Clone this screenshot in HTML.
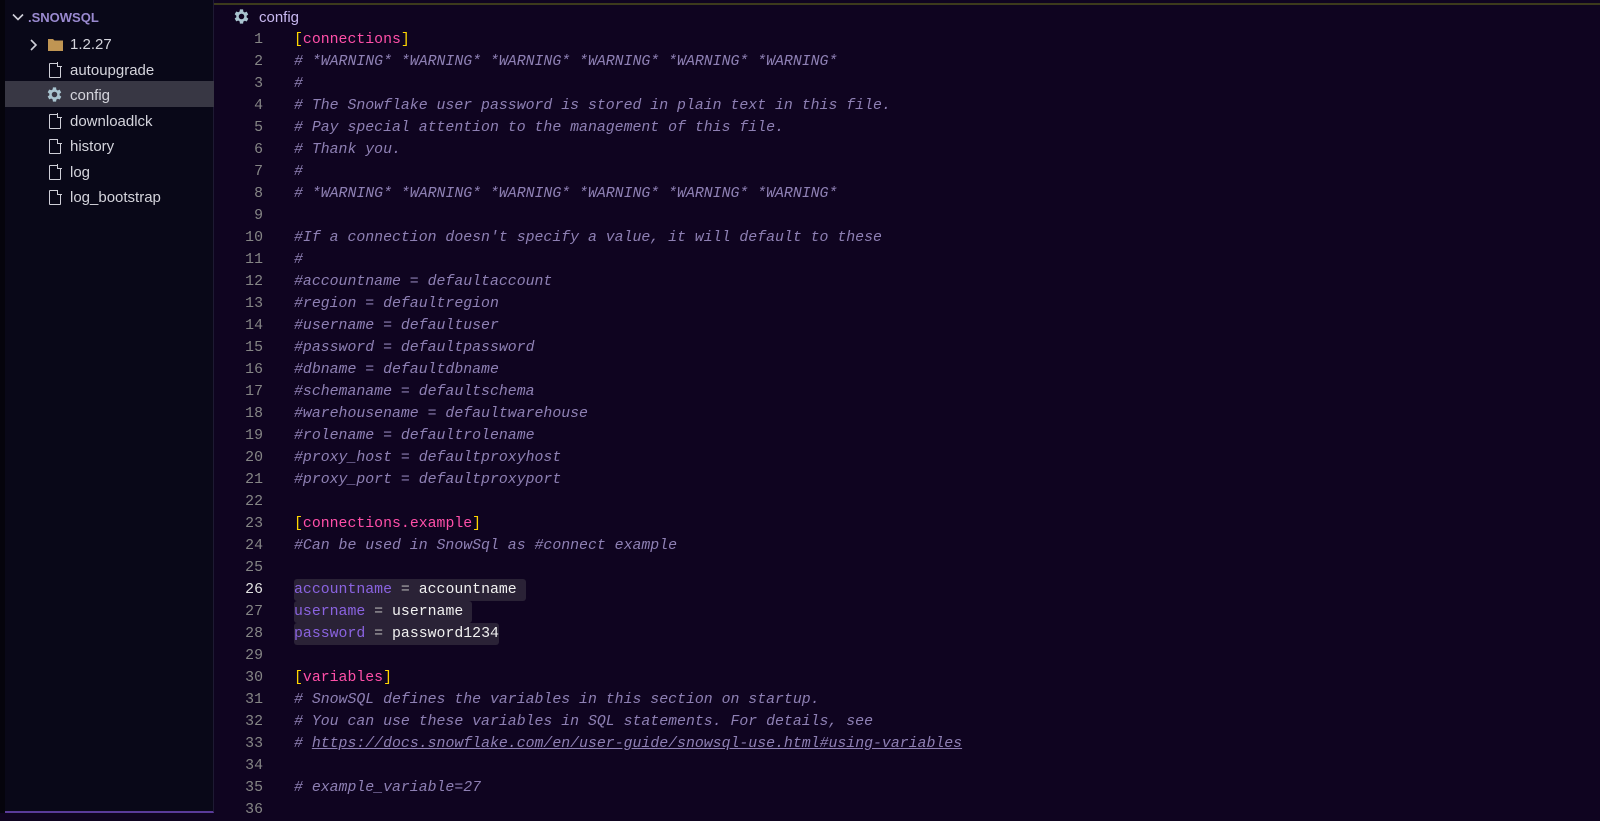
<!DOCTYPE html>
<html><head><meta charset="utf-8"><style>
*{margin:0;padding:0;box-sizing:border-box}
body{width:1600px;height:813px;overflow:hidden;background:#0f0420;font-family:"Liberation Sans",sans-serif;position:relative}
#side{position:absolute;left:0;top:0;width:214px;height:813px;background:#090818;border-right:1px solid #1e1a33;border-bottom:2px solid #5a3a9a}
#strip{position:absolute;left:0;top:0;width:5px;height:813px;background:#05040c}
.row{position:absolute;left:5px;width:209px;height:25.5px;color:#d4d4dc;font-size:15px;line-height:25.5px}
.row span{position:absolute;left:65px}
.sel{background:#383744}
.file{position:absolute;left:44px;top:5px;width:12px;height:15px;border:1.5px solid #cfcfd8;border-radius:1px}
.file:after{content:"";position:absolute;right:-1.5px;top:-1.5px;width:4px;height:4px;background:#090818;border-left:1.5px solid #cfcfd8;border-bottom:1.5px solid #cfcfd8}
#topline{position:absolute;left:214px;top:3px;width:1386px;height:2px;background:#3c3a1c}
#tab{position:absolute;left:259px;top:9px;color:#c8b8f0;font-size:15px}
#code{position:absolute;left:0;top:29px;font-family:"Liberation Mono",monospace;font-size:14.85px}
.l{position:absolute;left:294px;height:22px;line-height:22px;white-space:pre}
.n{position:absolute;left:200px;width:63px;text-align:right;color:#858585;height:22px;line-height:22px}
.c{color:#8e80b4;font-style:italic}
.b{color:#ffd700}.s{color:#ff4fa8}
.k{color:#8a63e0}.v{color:#f0f0f0}.e{color:#b0b0b0}
.hl{background:#2a2236;border-radius:3px}
</style></head><body>
<div id="side"><div id="strip"></div>
<div class="row" style="top:5px;"><svg style="position:absolute;left:7px;top:8px" width="12" height="9" viewBox="0 0 12 9"><path d="M1 1.5L6 6.5L11 1.5" stroke="#cfcfd8" stroke-width="1.6" fill="none"/></svg><span style="left:23px;font-weight:bold;font-size:13px;color:#9a8ad0">.SNOWSQL</span></div>
<div class="row" style="top:32px"><svg style="position:absolute;left:24px;top:7px" width="9" height="12" viewBox="0 0 9 12"><path d="M2 1L7 6L2 11" stroke="#cfcfd8" stroke-width="1.6" fill="none"/></svg><svg style="position:absolute;left:43px;top:6px" width="15" height="13" viewBox="0 0 15 13"><path d="M0 1h5l1.5 1.5H15V13H0z" fill="#c09553"/></svg><span>1.2.27</span></div>
<div class="row" style="top:57.5px"><div class="file"></div><span>autoupgrade</span></div>
<div class="row sel" style="top:81px;height:26px;line-height:29px"><svg style="position:absolute;left:40px;top:4px" width="19" height="19" viewBox="0 0 24 24"><path fill="#a9c4d0" d="M19.4 13a7.5 7.5 0 0 0 0-2l2.1-1.6-2-3.5-2.5 1a7.4 7.4 0 0 0-1.7-1L15 3h-4l-.4 2.7a7.4 7.4 0 0 0-1.7 1l-2.5-1-2 3.5L6.5 11a7.5 7.5 0 0 0 0 2l-2.1 1.6 2 3.5 2.5-1a7.4 7.4 0 0 0 1.7 1L11 21h4l.4-2.7a7.4 7.4 0 0 0 1.7-1l2.5 1 2-3.5zM13 15.5a3.5 3.5 0 1 1 0-7 3.5 3.5 0 0 1 0 7z" transform="translate(-1 0)"/></svg><span>config</span></div>
<div class="row" style="top:108.5px"><div class="file"></div><span>downloadlck</span></div>
<div class="row" style="top:134px"><div class="file"></div><span>history</span></div>
<div class="row" style="top:159.5px"><div class="file"></div><span>log</span></div>
<div class="row" style="top:185px"><div class="file"></div><span>log_bootstrap</span></div>
</div>
<div id="topline"></div>
<svg style="position:absolute;left:232px;top:7px" width="19" height="19" viewBox="0 0 24 24"><path fill="#a9c4d0" d="M19.4 13a7.5 7.5 0 0 0 0-2l2.1-1.6-2-3.5-2.5 1a7.4 7.4 0 0 0-1.7-1L15 3h-4l-.4 2.7a7.4 7.4 0 0 0-1.7 1l-2.5-1-2 3.5L6.5 11a7.5 7.5 0 0 0 0 2l-2.1 1.6 2 3.5 2.5-1a7.4 7.4 0 0 0 1.7 1L11 21h4l.4-2.7a7.4 7.4 0 0 0 1.7-1l2.5 1 2-3.5zM13 15.5a3.5 3.5 0 1 1 0-7 3.5 3.5 0 0 1 0 7z" transform="translate(-1 0)"/></svg>
<div id="tab">config</div>
<div id="code">
<div class="n" style="top:0px">1</div><div class="l" style="top:0px"><span class="b">[</span><span class="s">connections</span><span class="b">]</span></div>
<div class="n" style="top:22px">2</div><div class="l c" style="top:22px"># *WARNING* *WARNING* *WARNING* *WARNING* *WARNING* *WARNING*</div>
<div class="n" style="top:44px">3</div><div class="l c" style="top:44px">#</div>
<div class="n" style="top:66px">4</div><div class="l c" style="top:66px"># The Snowflake user password is stored in plain text in this file.</div>
<div class="n" style="top:88px">5</div><div class="l c" style="top:88px"># Pay special attention to the management of this file.</div>
<div class="n" style="top:110px">6</div><div class="l c" style="top:110px"># Thank you.</div>
<div class="n" style="top:132px">7</div><div class="l c" style="top:132px">#</div>
<div class="n" style="top:154px">8</div><div class="l c" style="top:154px"># *WARNING* *WARNING* *WARNING* *WARNING* *WARNING* *WARNING*</div>
<div class="n" style="top:176px">9</div>
<div class="n" style="top:198px">10</div><div class="l c" style="top:198px">#If a connection doesn't specify a value, it will default to these</div>
<div class="n" style="top:220px">11</div><div class="l c" style="top:220px">#</div>
<div class="n" style="top:242px">12</div><div class="l c" style="top:242px">#accountname = defaultaccount</div>
<div class="n" style="top:264px">13</div><div class="l c" style="top:264px">#region = defaultregion</div>
<div class="n" style="top:286px">14</div><div class="l c" style="top:286px">#username = defaultuser</div>
<div class="n" style="top:308px">15</div><div class="l c" style="top:308px">#password = defaultpassword</div>
<div class="n" style="top:330px">16</div><div class="l c" style="top:330px">#dbname = defaultdbname</div>
<div class="n" style="top:352px">17</div><div class="l c" style="top:352px">#schemaname = defaultschema</div>
<div class="n" style="top:374px">18</div><div class="l c" style="top:374px">#warehousename = defaultwarehouse</div>
<div class="n" style="top:396px">19</div><div class="l c" style="top:396px">#rolename = defaultrolename</div>
<div class="n" style="top:418px">20</div><div class="l c" style="top:418px">#proxy_host = defaultproxyhost</div>
<div class="n" style="top:440px">21</div><div class="l c" style="top:440px">#proxy_port = defaultproxyport</div>
<div class="n" style="top:462px">22</div>
<div class="n" style="top:484px">23</div><div class="l" style="top:484px"><span class="b">[</span><span class="s">connections.example</span><span class="b">]</span></div>
<div class="n" style="top:506px">24</div><div class="l c" style="top:506px">#Can be used in SnowSql as #connect example</div>
<div class="n" style="top:528px">25</div>
<div class="n" style="top:550px;color:#e0e0e0">26</div><div class="l hl" style="top:550px;padding-right:9px"><span class="k">accountname</span><span class="e"> = </span><span class="v">accountname</span></div>
<div class="n" style="top:572px">27</div><div class="l hl" style="top:572px;padding-right:9px"><span class="k">username</span><span class="e"> = </span><span class="v">username</span></div>
<div class="n" style="top:594px">28</div><div class="l hl" style="top:594px"><span class="k">password</span><span class="e"> = </span><span class="v">password1234</span></div>
<div class="n" style="top:616px">29</div>
<div class="n" style="top:638px">30</div><div class="l" style="top:638px"><span class="b">[</span><span class="s">variables</span><span class="b">]</span></div>
<div class="n" style="top:660px">31</div><div class="l c" style="top:660px"># SnowSQL defines the variables in this section on startup.</div>
<div class="n" style="top:682px">32</div><div class="l c" style="top:682px"># You can use these variables in SQL statements. For details, see</div>
<div class="n" style="top:704px">33</div><div class="l c" style="top:704px"># <u>https://docs.snowflake.com/en/user-guide/snowsql-use.html#using-variables</u></div>
<div class="n" style="top:726px">34</div>
<div class="n" style="top:748px">35</div><div class="l c" style="top:748px"># example_variable=27</div>
<div class="n" style="top:770px">36</div>
</div>
</body></html>
